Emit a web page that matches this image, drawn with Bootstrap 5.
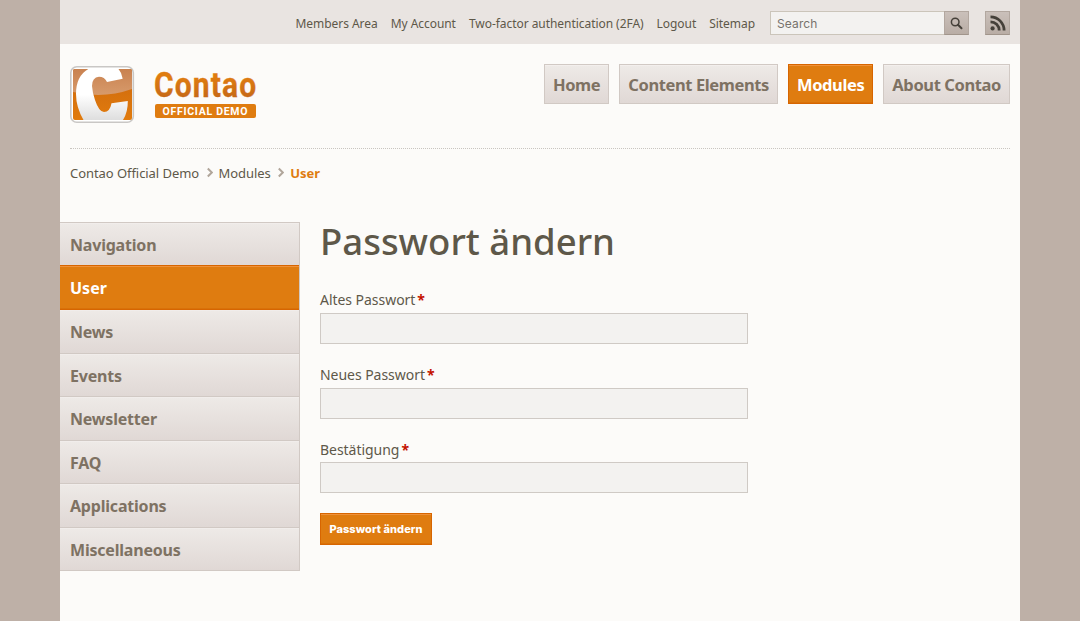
<!DOCTYPE html>
<html lang="en">
<head>
<meta charset="utf-8">
<meta name="viewport" content="width=device-width, initial-scale=1">
<title>User - Contao Official Demo</title>
<link href="https://cdn.jsdelivr.net/npm/bootstrap@5.3.0/dist/css/bootstrap.min.css" rel="stylesheet">
<style>
body{background:#beb0a7;color:#5e5849;font-family:"Noto Sans",sans-serif;font-size:14px;line-height:1.4}
a{color:inherit;text-decoration:none}
.page{width:960px;min-height:621px;background:#fcfbf9}
.topbar{height:44px;padding:11px 10px 0;background:#e9e4e1}
.meta-nav{gap:13px;font-size:12px;line-height:25px;margin-right:15px;letter-spacing:-.05px}
.search-box{width:174px;height:24px;border:1px solid #cbc5ba;border-right:0;border-radius:0;background:#f3f2f0;padding:1px 6px 0;font:12px Inter,sans-serif;color:#5e5849;letter-spacing:.12px}
.search-box::placeholder{color:#77736c;opacity:1}
.icon-btn{width:25px;height:24px;border:1px solid #b2a79f;border-bottom-color:#a1958b;border-radius:0;padding:0;background:linear-gradient(#cac0ba,#b9ada5);color:#454039}
.masthead{height:105px;margin:0 10px;border-bottom:1px dotted #c9c5c0;padding-top:20px}
.main-nav{gap:10px}
.main-nav a{height:40px;border:1px solid #d1c9c4;border-radius:0;padding:0 8px;font-size:16.5px;letter-spacing:-.39px;font-weight:700;line-height:40px;color:#7e7263;background:linear-gradient(#eeeae7,#e0d8d5);box-shadow:inset 0 1px #f3efed}
.main-nav a.active,.side-nav a.active,.send{color:#fff;background:#df7c10;border:1px solid #d76500;box-shadow:inset 0 1px #f0913a,inset 0 -1px #d97109}
.crumbs{height:73px;padding:14px 10px 0;font-size:13px;line-height:20px;letter-spacing:-.06px}
.crumbs b{color:#df7c10}
.crumbs svg{margin:4px 6px 0 7.5px}
.side-nav{width:240px;border:solid #d1c9c4;border-width:1px 1px 0 0}
.side-nav a{height:43.45px;padding:0 10px;font-size:16px;letter-spacing:-.2px;font-weight:700;line-height:44px;color:#7e7263;background:linear-gradient(#eeeae7,#e0d8d5);border-bottom:1px solid #d1c9c4;box-shadow:inset 0 1px #f1edeb}
.side-nav a.active{height:45px;margin-top:-1px;border-width:1px 0;letter-spacing:0}
.content{padding-left:20px;width:448px}
h1{font-size:36.5px;font-weight:500;line-height:39px;margin:0 0 27px}
.field{height:75px}
.field:nth-child(3) label{height:24px}
.field label{display:block;height:25px;line-height:24px;font-size:14px;letter-spacing:-.04px}
.field sup{color:#c41200;font-weight:700;font-size:14px;top:0;line-height:1;vertical-align:baseline;margin-left:2px}
.field input{width:428px;height:31px;border:1px solid #cfcac5;border-radius:0;background:#f3f2f0}
.send{height:32px;width:112px;border-radius:0;padding:0;font:800 11px Inter,sans-serif;letter-spacing:.05px}
</style>
</head>
<body>
<div class="page mx-auto">
  <div class="topbar d-flex justify-content-end">
    <nav class="meta-nav d-flex text-nowrap"><a href="#">Members Area</a><a href="#">My Account</a><a href="#">Two-factor authentication (2FA)</a><a href="#">Logout</a><a href="#">Sitemap</a></nav>
    <form class="d-flex"><input class="search-box form-control" placeholder="Search"><button type="button" class="icon-btn btn d-flex align-items-center justify-content-center" aria-label="Search"><svg width="13" height="13" viewBox="0 0 13 13" fill="none" stroke="currentColor"><circle cx="5.2" cy="5" r="3.8" stroke-width="1.5"/><path d="M8 7.8 11.5 11.3" stroke-width="2" stroke-linecap="round"/></svg></button></form>
    <a href="#" class="icon-btn ms-3 d-flex align-items-center justify-content-center" aria-label="RSS"><svg width="16" height="16" viewBox="0 0 16 16" fill="none" stroke="currentColor" stroke-width="2.8"><circle cx="2.6" cy="13.4" r="2.1" fill="currentColor" stroke="none"/><path d="M.5 6.8A8.7 8.7 0 0 1 9.2 15.500M.5 1.900A13.600 13.600 0 0 1 14.100 15.500"/></svg></a>
  </div>
  <header class="masthead d-flex justify-content-between align-items-start">
    <a href="#" aria-label="Contao Official Demo"><svg width="220" height="62" viewBox="0 0 220 62" class="d-block">
      <defs><linearGradient id="w" x2="0" y2="1"><stop stop-color="#fff"/><stop offset=".5" stop-color="#fff"/><stop offset="1" stop-color="#dedede"/></linearGradient><linearGradient id="o" x2="0" y2="1"><stop offset=".3" stop-color="#df7c10"/><stop offset="1" stop-color="#bc621b"/></linearGradient><linearGradient id="p" x2="0" y2="1"><stop stop-color="#cc680e"/><stop offset="1" stop-color="#e17b0d"/></linearGradient><linearGradient id="g" x2="0" y2="1"><stop stop-color="#c98250"/><stop offset="1" stop-color="#d79a6b"/></linearGradient><clipPath id="c"><rect x="3" y="5" width="59" height="51" rx="2"/></clipPath></defs>
      <rect x=".8" y="2.800" width="62.500" height="55.500" rx="6" fill="#fff" stroke="#c9c7c5" stroke-width="1.600"/>
      <g clip-path="url(#c)"><rect x="3" y="5" width="59" height="51" fill="url(#p)"/><path d="M3 5H62V25Q34 35 3 28Z" fill="url(#g)"/>
      <path d="M18.300 5H48.500Q52 9 52.700 14.700L37 18Q34.500 12.800 29 12.800Q22 13.500 22 22Q22.500 29 25 36Q29 48 34 48Q40 48 41.500 39.300L57.800 37Q58 48 53 56H13.500Q6 43 6 30Q6 12 18.300 5Z" fill="url(#w)"/></g>
      <text transform="translate(84 33.200) scale(.87 1)" font-family="Roboto,sans-serif" font-weight="700" font-size="34.500" textLength="117.500" fill="url(#o)" stroke="url(#o)" stroke-width=".3">Contao</text>
      <rect x="85" y="40" width="101" height="14" rx="2" fill="#df7c10"/>
      <text x="92.500" y="50.800" font-family="Roboto,sans-serif" font-weight="700" font-size="10.500" textLength="85" fill="#fff">OFFICIAL DEMO</text>
    </svg></a>
    <nav class="main-nav d-flex text-nowrap"><a href="#">Home</a><a href="#">Content Elements</a><a class="active" href="#">Modules</a><a href="#">About Contao</a></nav>
  </header>
  <div class="crumbs d-flex"><a href="#">Contao Official Demo</a><svg width="6" height="12" viewBox="0 0 6 12" fill="none" stroke="#b1a69b" stroke-width="2"><path d="m.8 1.500 4 4-4 4"/></svg><a href="#">Modules</a><svg width="6" height="12" viewBox="0 0 6 12" fill="none" stroke="#b1a69b" stroke-width="2"><path d="m.8 1.500 4 4-4 4"/></svg><b>User</b></div>
  <div class="d-flex align-items-start">
    <nav class="side-nav d-flex flex-column"><a href="#">Navigation</a><a class="active" href="#">User</a><a href="#">News</a><a href="#">Events</a><a href="#">Newsletter</a><a href="#">FAQ</a><a href="#">Applications</a><a href="#">Miscellaneous</a></nav>
    <main class="content">
      <h1>Passwort ändern</h1>
      <form>
        <div class="field"><label for="a">Altes Passwort<sup>*</sup></label><input id="a" type="password" class="form-control"></div>
        <div class="field"><label for="b">Neues Passwort<sup>*</sup></label><input id="b" type="password" class="form-control"></div>
        <div class="field"><label for="d">Bestätigung<sup>*</sup></label><input id="d" type="password" class="form-control"></div>
        <button type="button" class="btn send">Passwort ändern</button>
      </form>
    </main>
  </div>
</div>
<script src="https://cdn.jsdelivr.net/npm/bootstrap@5.3.0/dist/js/bootstrap.bundle.min.js"></script>
</body>
</html>
